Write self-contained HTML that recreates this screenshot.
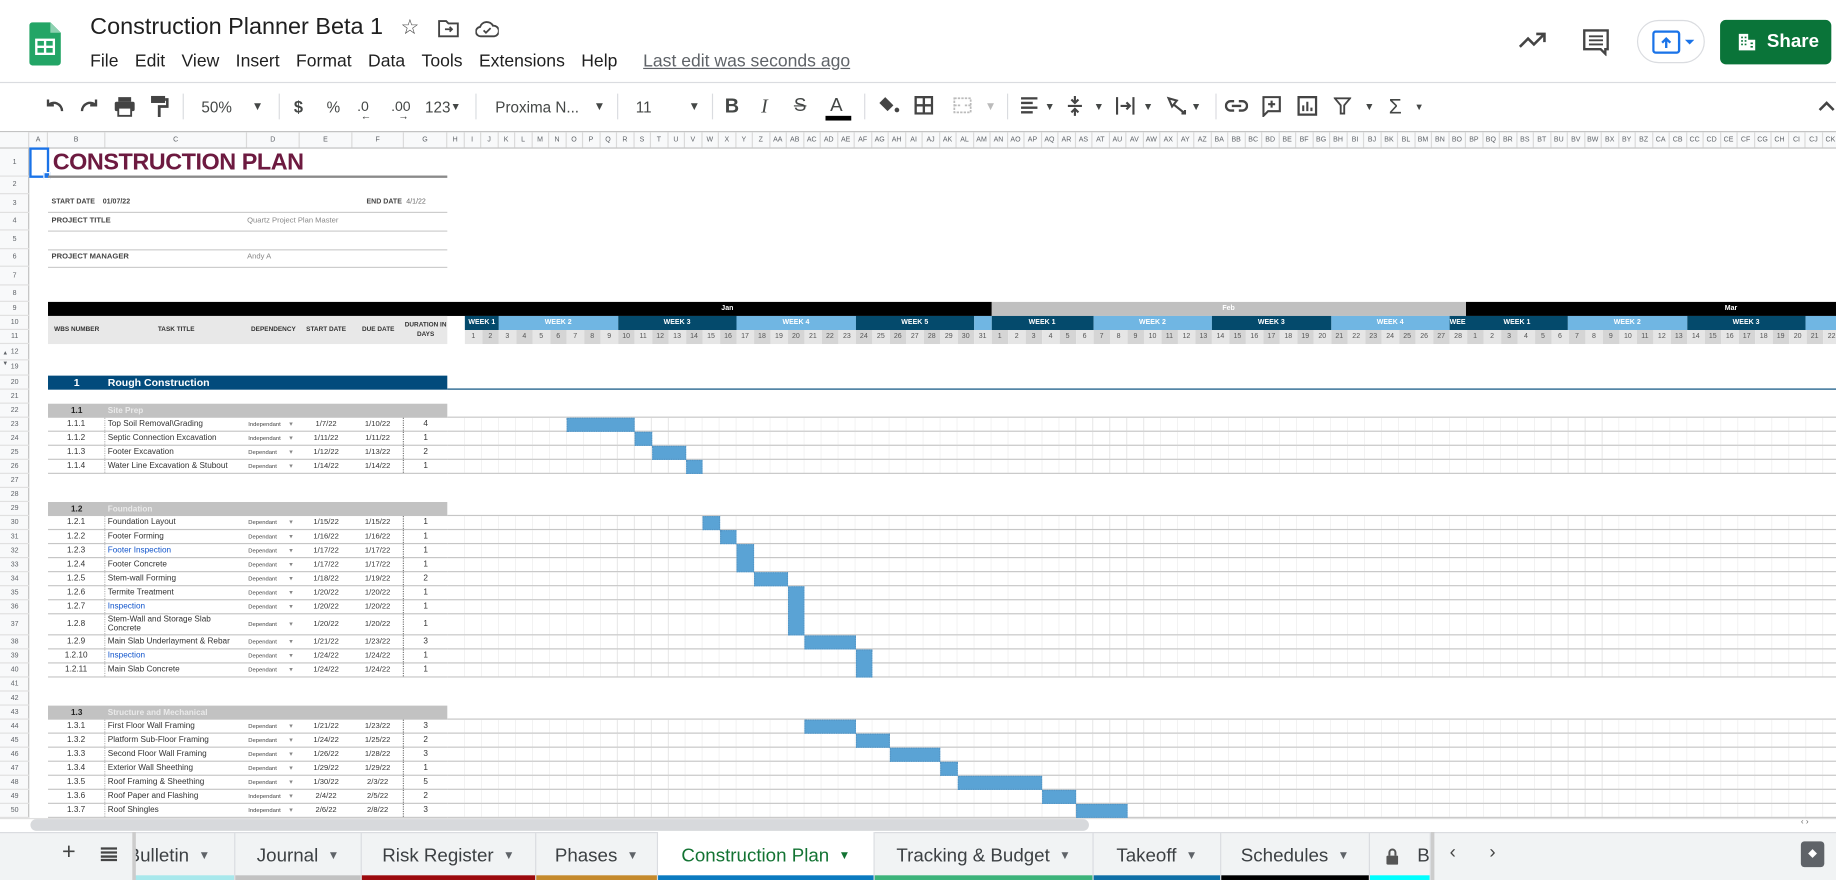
<!DOCTYPE html>
<html><head><meta charset="utf-8">
<style>
*{box-sizing:border-box;margin:0;padding:0}
html,body{width:1836px;height:880px;overflow:hidden;background:#fff}
#w{position:absolute;left:0;top:0;width:1568px;height:752px;transform:scale(1.17092,1.1702);transform-origin:0 0;font-family:"Liberation Sans",Arial,sans-serif;color:#202124;overflow:hidden}
.a{position:absolute}
.menu span{margin-right:14px}
.tb{position:absolute;top:81px;height:20px;display:flex;align-items:center;justify-content:center;color:#444746;font-size:14px}
.sep{position:absolute;top:80px;width:1px;height:22px;background:#dadce0}
#colh{position:absolute;top:112px;left:0;height:15px;display:flex;background:#f8f9fa;border-top:1px solid #c0c0c0;border-bottom:1px solid #c0c0c0;font-size:6px;color:#5f6368}
#colh span{border-right:1px solid #dadada;display:flex;align-items:center;justify-content:center;flex:none;width:14.5px;height:13px;overflow:hidden}
#rowh{position:absolute;left:0;top:127px;width:25px;height:572px;background:#f8f9fa;border-right:1px solid #c0c0c0}
.rn{position:absolute;left:0;width:25px;font-size:6px;color:#5f6368;text-align:center;border-bottom:1px solid #e0e0e0;display:flex;align-items:center;justify-content:center}
.r{position:absolute;left:41px;width:341px;display:flex;border-bottom:1px solid #c6c6c6;font-size:7px;color:#333;align-items:center}
.r>div{height:100%;display:flex;align-items:center;flex:none}
.c1{width:49px;justify-content:center;border-right:1px dotted #bbb}
.c2{width:121px;padding-left:2px;line-height:8px}
.c3{width:45px;font-size:5px;padding-left:1px;color:#444;position:relative}
.c3:after{content:"▾";position:absolute;right:6px;font-size:6px;color:#888}
.c4{width:45px;justify-content:center;font-size:6.5px}
.c5{width:44px;justify-content:center;font-size:6.5px;border-right:1px dotted #777}
.c6{width:37px;justify-content:center}
.g{position:absolute;left:382px;width:1186px;border-bottom:1px solid #c6c6c6;background-image:repeating-linear-gradient(to right,transparent 0,transparent 14px,#e6e6e6 14px,#e6e6e6 14.5px);background-position:0.5px 0}
.bar{position:absolute;background:#5aa3d5;border:1px dotted #5595c4}
.grp{position:absolute;left:41px;width:341px;height:12px;background:#c2c2c2;display:flex;align-items:center;font-size:7px;font-weight:bold}
.grp .n{width:49px;text-align:center;color:#222}
.grp .t{color:#eaeaea;padding-left:2px}
.blue{color:#1155cc}
#days{position:absolute;left:397px;top:282px;height:12px;display:flex;font-size:6px;color:#555}
#days span{width:14.5px;flex:none;text-align:center;line-height:12px}
#days span:nth-child(even){background:#d5d5d5}
#days span:nth-child(odd){background:#e6e6e6}
.wk{position:absolute;top:270px;height:12px;color:#fff;font-size:6px;font-weight:bold;display:flex;align-items:center;justify-content:center;overflow:hidden;white-space:nowrap}
.dk{background:#044a6c}.lt{background:#70b6e3}
.tab{position:absolute;top:711px;height:41px;display:flex;align-items:center;justify-content:center;font-size:16px;color:#3c4043;border-right:1px solid #dadce0}
.tab i{font-style:normal;font-size:10px;margin-left:8px;color:#5f6368}
.tab b{position:absolute;left:0;right:0;bottom:0;height:4px}
</style></head><body><div id="w">

<svg class="a" style="left:25px;top:19px" width="27" height="37" viewBox="0 0 27 37"><path d="M3 0h15l9 9v25a3 3 0 0 1-3 3H3a3 3 0 0 1-3-3V3a3 3 0 0 1 3-3z" fill="#23a566"/><path d="M18 0v9h9z" fill="#8ed1b1"/><rect x="6" y="15" width="15" height="12" fill="none" stroke="#fff" stroke-width="2"/><path d="M6 21h15M13.5 15v12" stroke="#fff" stroke-width="2"/></svg>
<div class="a" style="left:77px;top:12px;font-size:20px;color:#1f1f1f">Construction Planner Beta 1</div>
<div class="a" style="left:342px;top:13px;font-size:18px;color:#444">☆</div>
<svg class="a" style="left:374px;top:16px" width="18" height="16" viewBox="0 0 18 16"><path d="M1 2h6l2 2h8v11H1z" fill="none" stroke="#444" stroke-width="1.6"/><path d="M6 9h6M10 7l2 2-2 2" fill="none" stroke="#444" stroke-width="1.5"/></svg>
<svg class="a" style="left:406px;top:17px" width="20" height="15" viewBox="0 0 20 15"><path d="M5 14a4 4 0 0 1-1-8 6 6 0 0 1 11-1 4.5 4.5 0 0 1 1 9z" fill="none" stroke="#444" stroke-width="1.6"/><path d="M7 9l2 2 4-4" fill="none" stroke="#444" stroke-width="1.5"/></svg>
<div class="a menu" style="left:77px;top:44px;font-size:15px;color:#1f1f1f;white-space:nowrap"><span>File</span><span>Edit</span><span>View</span><span>Insert</span><span>Format</span><span>Data</span><span>Tools</span><span>Extensions</span><span style="margin-right:22px">Help</span><span style="color:#5f6368;text-decoration:underline">Last edit was seconds ago</span></div>
<svg class="a" style="left:1297px;top:26px" width="24" height="16" viewBox="0 0 24 16"><path d="M1 14l7-7 5 5 8-8" fill="none" stroke="#444" stroke-width="2.2"/><path d="M15 3h7v7" fill="none" stroke="#444" stroke-width="2.2"/></svg>
<svg class="a" style="left:1351px;top:24px" width="24" height="24" viewBox="0 0 24 24"><path d="M2 2h20v16h-2v4l-4-4H2z" fill="none" stroke="#444" stroke-width="2"/><path d="M6 7h12M6 10.5h12M6 14h12" stroke="#444" stroke-width="1.6"/></svg>
<div class="a" style="left:1398px;top:17px;width:58px;height:37px;border:1px solid #dadce0;border-radius:19px"></div>
<svg class="a" style="left:1411px;top:26px" width="36" height="20" viewBox="0 0 36 20"><rect x="1" y="1" width="22" height="18" rx="2" fill="none" stroke="#1a73e8" stroke-width="2"/><path d="M12 15V7M8.5 10.5L12 7l3.5 3.5" fill="none" stroke="#1a73e8" stroke-width="2"/><path d="M28 8h8l-4 4z" fill="#1a73e8"/></svg>
<div class="a" style="left:1469px;top:17px;width:95px;height:38px;background:#0a7439;border-radius:5px;color:#fff;font-size:16px;font-weight:bold;display:flex;align-items:center;padding-left:40px">Share</div>
<svg class="a" style="left:1484px;top:28px" width="16" height="16" viewBox="0 0 16 16"><path d="M1 1h8v14H1zM9 6h6v9H9z" fill="#fff"/><path d="M3 4h1.5M6 4h1.5M3 7h1.5M6 7h1.5M3 10h1.5M6 10h1.5M11 9h2M11 12h2" stroke="#0a7439" stroke-width="1.4"/></svg>
<div class="a" style="left:0;top:70px;width:1568px;height:1px;background:#dadce0"></div>

<svg class="a" style="left:37px;top:83px" width="18" height="14" viewBox="0 0 18 14"><path d="M16 12a7 7 0 0 0-12-5M4 2v5h5" fill="none" stroke="#444" stroke-width="2"/></svg>
<svg class="a" style="left:68px;top:83px" width="18" height="14" viewBox="0 0 18 14"><path d="M2 12a7 7 0 0 1 12-5M14 2v5H9" fill="none" stroke="#444" stroke-width="2"/></svg>
<svg class="a" style="left:97px;top:82px" width="19" height="18" viewBox="0 0 19 18"><rect x="4" y="1" width="11" height="4" fill="#444"/><rect x="1" y="5" width="17" height="8" rx="1.5" fill="#444"/><rect x="4" y="10" width="11" height="7" fill="#fff" stroke="#444" stroke-width="1.6"/></svg>
<svg class="a" style="left:128px;top:81px" width="16" height="20" viewBox="0 0 16 20"><rect x="1" y="1" width="12" height="6" fill="#444"/><path d="M13 4h2v6H8v9" fill="none" stroke="#444" stroke-width="2.4"/></svg>
<div class="sep" style="left:156px"></div>
<div class="tb" style="left:172px;font-size:13px">50%</div>
<div class="tb" style="left:215px;font-size:10px">▼</div>
<div class="sep" style="left:238px"></div>
<div class="tb" style="left:251px;font-size:14px;font-weight:bold">$</div>
<div class="tb" style="left:279px;font-size:13px">%</div>
<div class="tb" style="left:305px;font-size:12px">.0<span style="font-size:9px;position:absolute;left:3px;top:13px">←</span></div>
<div class="tb" style="left:334px;font-size:12px">.00<span style="font-size:9px;position:absolute;left:6px;top:13px">→</span></div>
<div class="tb" style="left:363px;font-size:13px">123<span style="font-size:9px">▼</span></div>
<div class="sep" style="left:406px"></div>
<div class="tb" style="left:423px;font-size:13px">Proxima N...</div>
<div class="tb" style="left:507px;font-size:10px">▼</div>
<div class="sep" style="left:527px"></div>
<div class="tb" style="left:543px;font-size:13px">11</div>
<div class="tb" style="left:588px;font-size:10px">▼</div>
<div class="sep" style="left:608px"></div>
<div class="tb" style="left:619px;font-size:17px;font-weight:bold">B</div>
<div class="tb" style="left:650px;font-size:17px;font-style:italic;font-family:'Liberation Serif',serif">I</div>
<div class="tb" style="left:678px;font-size:16px;text-decoration:line-through">S</div>
<div class="tb" style="left:709px;font-size:16px">A</div>
<div class="a" style="left:705px;top:99px;width:22px;height:4px;background:#000"></div>
<div class="sep" style="left:738px"></div>
<svg class="a" style="left:749px;top:82px" width="20" height="16" viewBox="0 0 20 16"><path d="M7 1l7 7-5 5-7-7z" fill="#444"/><circle cx="17" cy="12" r="2" fill="#444"/></svg>
<svg class="a" style="left:781px;top:82px" width="16" height="16" viewBox="0 0 16 16"><rect x="1" y="1" width="14" height="14" fill="none" stroke="#444" stroke-width="2"/><path d="M8 1v14M1 8h14" stroke="#444" stroke-width="2"/></svg>
<svg class="a" style="left:814px;top:83px" width="16" height="14" viewBox="0 0 16 14"><path d="M1 1h14v12H1zM1 7h5M10 7h5" fill="none" stroke="#bbb" stroke-width="1.5" stroke-dasharray="2 1"/></svg>
<div class="tb" style="left:841px;font-size:10px;color:#bbb">▼</div>
<div class="sep" style="left:860px"></div>
<svg class="a" style="left:871px;top:83px" width="16" height="14" viewBox="0 0 16 14"><path d="M1 1h14M1 5h10M1 9h14M1 13h10" stroke="#444" stroke-width="2"/></svg>
<div class="tb" style="left:892px;font-size:9px">▼</div>
<svg class="a" style="left:911px;top:81px" width="14" height="19" viewBox="0 0 14 19"><path d="M1 9.5h12M7 1v6M4 4l3 3 3-3M7 18v-6M4 15l3-3 3 3" fill="none" stroke="#444" stroke-width="1.8"/></svg>
<div class="tb" style="left:934px;font-size:9px">▼</div>
<svg class="a" style="left:952px;top:82px" width="18" height="17" viewBox="0 0 18 17"><path d="M2 1v15M16 1v15M5 8.5h8M10 5.5l3 3-3 3" fill="none" stroke="#444" stroke-width="1.8"/></svg>
<div class="tb" style="left:976px;font-size:9px">▼</div>
<svg class="a" style="left:996px;top:82px" width="18" height="16" viewBox="0 0 18 16"><path d="M2 2l7 2 -4 5zM6 7l10 8M13 15h3v-3" fill="none" stroke="#444" stroke-width="1.8"/></svg>
<div class="tb" style="left:1017px;font-size:9px">▼</div>
<div class="sep" style="left:1038px"></div>
<svg class="a" style="left:1046px;top:85px" width="20" height="11" viewBox="0 0 20 11"><path d="M8 1.5H5a4 4 0 0 0 0 8h3M12 1.5h3a4 4 0 0 1 0 8h-3M6 5.5h8" fill="none" stroke="#444" stroke-width="2"/></svg>
<svg class="a" style="left:1078px;top:82px" width="16" height="18" viewBox="0 0 16 18"><path d="M1 1h14v12H5l-4 4z" fill="none" stroke="#444" stroke-width="1.8"/><path d="M8 4v6M5 7h6" stroke="#444" stroke-width="1.8"/></svg>
<svg class="a" style="left:1108px;top:82px" width="17" height="17" viewBox="0 0 17 17"><rect x="1" y="1" width="15" height="15" fill="none" stroke="#444" stroke-width="2"/><path d="M5 13V8M8.5 13V5M12 13v-3" stroke="#444" stroke-width="1.8"/></svg>
<svg class="a" style="left:1139px;top:83px" width="15" height="15" viewBox="0 0 15 15"><path d="M1 1h13L9 7v7H6V7z" fill="none" stroke="#444" stroke-width="1.6"/></svg>
<div class="tb" style="left:1165px;font-size:9px">▼</div>
<div class="tb" style="left:1186px;font-size:18px">Σ</div>
<div class="tb" style="left:1208px;font-size:8px">▼</div>
<svg class="a" style="left:1553px;top:86px" width="14" height="9" viewBox="0 0 14 9"><path d="M1 8l6-6 6 6" fill="none" stroke="#444" stroke-width="2.2"/></svg>

<div id="colh"><span style="width:25px;background:#f8f9fa"></span><span style="width:16px">A</span><span style="width:49px">B</span><span style="width:121px">C</span><span style="width:45px">D</span><span style="width:45px">E</span><span style="width:44px">F</span><span style="width:37px">G</span><span>H</span><span>I</span><span>J</span><span>K</span><span>L</span><span>M</span><span>N</span><span>O</span><span>P</span><span>Q</span><span>R</span><span>S</span><span>T</span><span>U</span><span>V</span><span>W</span><span>X</span><span>Y</span><span>Z</span><span>AA</span><span>AB</span><span>AC</span><span>AD</span><span>AE</span><span>AF</span><span>AG</span><span>AH</span><span>AI</span><span>AJ</span><span>AK</span><span>AL</span><span>AM</span><span>AN</span><span>AO</span><span>AP</span><span>AQ</span><span>AR</span><span>AS</span><span>AT</span><span>AU</span><span>AV</span><span>AW</span><span>AX</span><span>AY</span><span>AZ</span><span>BA</span><span>BB</span><span>BC</span><span>BD</span><span>BE</span><span>BF</span><span>BG</span><span>BH</span><span>BI</span><span>BJ</span><span>BK</span><span>BL</span><span>BM</span><span>BN</span><span>BO</span><span>BP</span><span>BQ</span><span>BR</span><span>BS</span><span>BT</span><span>BU</span><span>BV</span><span>BW</span><span>BX</span><span>BY</span><span>BZ</span><span>CA</span><span>CB</span><span>CC</span><span>CD</span><span>CE</span><span>CF</span><span>CG</span><span>CH</span><span>CI</span><span>CJ</span><span>CK</span></div>

<div id="rowh">
<div class="rn" style="top:0;height:24px">1</div><div class="rn" style="top:24px;height:15px">2</div><div class="rn" style="top:39px;height:16px">3</div><div class="rn" style="top:55px;height:15px">4</div><div class="rn" style="top:70px;height:16px">5</div><div class="rn" style="top:86px;height:15px">6</div><div class="rn" style="top:101px;height:16px">7</div><div class="rn" style="top:117px;height:14px">8</div><div class="rn" style="top:131px;height:12px">9</div><div class="rn" style="top:143px;height:12px">10</div><div class="rn" style="top:155px;height:12px">11</div><div class="rn" style="top:167px;height:14px">12<span class="a" style="left:2px;top:5px;font-size:5px">▲</span></div><div class="rn" style="top:181px;height:13px">19<span class="a" style="left:2px;top:0;font-size:5px">▼</span></div>
<div class="rn" style="top:194px;height:12px">20</div><div class="rn" style="top:206px;height:12px">21</div><div class="rn" style="top:218px;height:12px">22</div><div class="rn" style="top:230px;height:12px">23</div><div class="rn" style="top:242px;height:12px">24</div><div class="rn" style="top:254px;height:12px">25</div><div class="rn" style="top:266px;height:12px">26</div><div class="rn" style="top:278px;height:12px">27</div><div class="rn" style="top:290px;height:12px">28</div><div class="rn" style="top:302px;height:12px">29</div><div class="rn" style="top:314px;height:12px">30</div><div class="rn" style="top:326px;height:12px">31</div><div class="rn" style="top:338px;height:12px">32</div><div class="rn" style="top:350px;height:12px">33</div><div class="rn" style="top:362px;height:12px">34</div><div class="rn" style="top:374px;height:12px">35</div><div class="rn" style="top:386px;height:12px">36</div><div class="rn" style="top:398px;height:18px">37</div><div class="rn" style="top:416px;height:12px">38</div><div class="rn" style="top:428px;height:12px">39</div><div class="rn" style="top:440px;height:12px">40</div><div class="rn" style="top:452px;height:12px">41</div><div class="rn" style="top:464px;height:12px">42</div><div class="rn" style="top:476px;height:12px">43</div><div class="rn" style="top:488px;height:12px">44</div><div class="rn" style="top:500px;height:12px">45</div><div class="rn" style="top:512px;height:12px">46</div><div class="rn" style="top:524px;height:12px">47</div><div class="rn" style="top:536px;height:12px">48</div><div class="rn" style="top:548px;height:12px">49</div><div class="rn" style="top:560px;height:12px">50</div>
</div>

<div class="a" style="left:25px;top:126px;width:17px;height:26px;border:2px solid #1a73e8"></div>
<div class="a" style="left:37px;top:147px;width:6px;height:6px;background:#1a73e8;border:1px solid #fff"></div>
<div class="a" style="left:45px;top:127px;font-size:20px;font-weight:bold;color:#6d1a40;line-height:24px;letter-spacing:-0.4px">CONSTRUCTION PLAN</div>
<div class="a" style="left:41px;top:150px;width:341px;height:2px;background:#8a8a8a"></div>
<div class="a" style="left:44px;top:170px;font-size:6px;font-weight:bold;color:#444">START DATE &nbsp;&nbsp; 01/07/22</div>
<div class="a" style="left:313px;top:170px;font-size:6px;font-weight:bold;color:#444">END DATE</div>
<div class="a" style="left:347px;top:170px;font-size:6px;color:#666">4/1/22</div>
<div class="a" style="left:41px;top:181px;width:341px;height:1px;background:#ccc"></div>
<div class="a" style="left:44px;top:185px;font-size:6.5px;font-weight:bold;color:#444">PROJECT TITLE</div>
<div class="a" style="left:211px;top:185px;font-size:6.5px;color:#888">Quartz Project Plan Master</div>
<div class="a" style="left:41px;top:197px;width:341px;height:1px;background:#ccc"></div>
<div class="a" style="left:41px;top:213px;width:341px;height:1px;background:#ccc"></div>
<div class="a" style="left:44px;top:216px;font-size:6.5px;font-weight:bold;color:#444">PROJECT MANAGER</div>
<div class="a" style="left:211px;top:216px;font-size:6.5px;color:#888">Andy A</div>
<div class="a" style="left:41px;top:228px;width:341px;height:1px;background:#ccc"></div>

<div class="a" style="left:41px;top:258px;width:806px;height:12px;background:#000"></div>
<div class="a" style="left:616px;top:258px;font-size:6px;color:#fff;font-weight:bold;line-height:12px">Jan</div>
<div class="a" style="left:846.5px;top:258px;width:405.5px;height:12px;background:#c0c0c0;color:#fff;font-size:6px;font-weight:bold;text-align:center;line-height:12px">Feb</div>
<div class="a" style="left:1252px;top:258px;width:316px;height:12px;background:#000;color:#fff;font-size:6px;font-weight:bold;line-height:12px;padding-left:221px">Mar</div>

<div class="a" style="left:41px;top:270px;width:341px;height:24px;background:#e8e8e8;display:flex;align-items:center;font-size:5.5px;font-weight:bold;color:#333">
<div style="width:49px;text-align:center">WBS NUMBER</div><div style="width:121px;text-align:center">TASK TITLE</div><div style="width:45px;text-align:center">DEPENDENCY</div><div style="width:45px;text-align:center">START DATE</div><div style="width:44px;text-align:center">DUE DATE</div><div style="width:37px;text-align:center;line-height:8px">DURATION IN DAYS</div></div>

<div class="wk dk" style="left:397px;width:29px">WEEK 1</div>
<div class="wk lt" style="left:426px;width:101.5px">WEEK 2</div>
<div class="wk dk" style="left:527.5px;width:101.5px">WEEK 3</div>
<div class="wk lt" style="left:629px;width:101.5px">WEEK 4</div>
<div class="wk dk" style="left:730.5px;width:101.5px">WEEK 5</div>
<div class="wk lt" style="left:832px;width:14.5px"></div>
<div class="wk dk" style="left:846.5px;width:87px">WEEK 1</div>
<div class="wk lt" style="left:933.5px;width:101.5px">WEEK 2</div>
<div class="wk dk" style="left:1035px;width:101.5px">WEEK 3</div>
<div class="wk lt" style="left:1136.5px;width:101.5px">WEEK 4</div>
<div class="wk dk" style="left:1238px;width:14.5px;justify-content:flex-start">WEEK</div>
<div class="wk dk" style="left:1252px;width:87px">WEEK 1</div>
<div class="wk lt" style="left:1339px;width:101.5px">WEEK 2</div>
<div class="wk dk" style="left:1440.5px;width:101.5px">WEEK 3</div>
<div class="wk lt" style="left:1542px;width:30px"></div>

<div id="days"><span>1</span><span>2</span><span>3</span><span>4</span><span>5</span><span>6</span><span>7</span><span>8</span><span>9</span><span>10</span><span>11</span><span>12</span><span>13</span><span>14</span><span>15</span><span>16</span><span>17</span><span>18</span><span>19</span><span>20</span><span>21</span><span>22</span><span>23</span><span>24</span><span>25</span><span>26</span><span>27</span><span>28</span><span>29</span><span>30</span><span>31</span><span>1</span><span>2</span><span>3</span><span>4</span><span>5</span><span>6</span><span>7</span><span>8</span><span>9</span><span>10</span><span>11</span><span>12</span><span>13</span><span>14</span><span>15</span><span>16</span><span>17</span><span>18</span><span>19</span><span>20</span><span>21</span><span>22</span><span>23</span><span>24</span><span>25</span><span>26</span><span>27</span><span>28</span><span>1</span><span>2</span><span>3</span><span>4</span><span>5</span><span>6</span><span>7</span><span>8</span><span>9</span><span>10</span><span>11</span><span>12</span><span>13</span><span>14</span><span>15</span><span>16</span><span>17</span><span>18</span><span>19</span><span>20</span><span>21</span><span>22</span></div>

<div class="a" style="left:41px;top:321px;width:341px;height:12px;background:#024b7c;color:#fff;font-size:9px;font-weight:bold;display:flex;align-items:center"><span style="width:49px;text-align:center">1</span><span style="padding-left:2px">Rough Construction</span></div>
<div class="a" style="left:382px;top:332px;width:1186px;height:1px;background:#024b7c"></div>

<div class="grp" style="top:345px"><span class="n">1.1</span><span class="t">Site Prep</span></div>
<div class="a" style="left:382px;top:356px;width:1186px;height:1px;background:#c6c6c6"></div>
<div class="r" style="top:357px;height:12px"><div class="c1">1.1.1</div><div class="c2">Top Soil Removal\Grading</div><div class="c3">Independant</div><div class="c4">1/7/22</div><div class="c5">1/10/22</div><div class="c6">4</div></div>
<div class="r" style="top:369px;height:12px"><div class="c1">1.1.2</div><div class="c2">Septic Connection Excavation</div><div class="c3">Independant</div><div class="c4">1/11/22</div><div class="c5">1/11/22</div><div class="c6">1</div></div>
<div class="r" style="top:381px;height:12px"><div class="c1">1.1.3</div><div class="c2">Footer Excavation</div><div class="c3">Dependant</div><div class="c4">1/12/22</div><div class="c5">1/13/22</div><div class="c6">2</div></div>
<div class="r" style="top:393px;height:12px"><div class="c1">1.1.4</div><div class="c2">Water Line Excavation &amp; Stubout</div><div class="c3">Dependant</div><div class="c4">1/14/22</div><div class="c5">1/14/22</div><div class="c6">1</div></div>
<div class="g" style="top:357px;height:12px"></div><div class="g" style="top:369px;height:12px"></div><div class="g" style="top:381px;height:12px"></div><div class="g" style="top:393px;height:12px"></div>

<div class="grp" style="top:429px"><span class="n">1.2</span><span class="t">Foundation</span></div>
<div class="a" style="left:382px;top:440px;width:1186px;height:1px;background:#c6c6c6"></div>
<div class="r" style="top:441px;height:12px"><div class="c1">1.2.1</div><div class="c2">Foundation Layout</div><div class="c3">Dependant</div><div class="c4">1/15/22</div><div class="c5">1/15/22</div><div class="c6">1</div></div>
<div class="r" style="top:453px;height:12px"><div class="c1">1.2.2</div><div class="c2">Footer Forming</div><div class="c3">Dependant</div><div class="c4">1/16/22</div><div class="c5">1/16/22</div><div class="c6">1</div></div>
<div class="r" style="top:465px;height:12px"><div class="c1">1.2.3</div><div class="c2 blue">Footer Inspection</div><div class="c3">Dependant</div><div class="c4">1/17/22</div><div class="c5">1/17/22</div><div class="c6">1</div></div>
<div class="r" style="top:477px;height:12px"><div class="c1">1.2.4</div><div class="c2">Footer Concrete</div><div class="c3">Dependant</div><div class="c4">1/17/22</div><div class="c5">1/17/22</div><div class="c6">1</div></div>
<div class="r" style="top:489px;height:12px"><div class="c1">1.2.5</div><div class="c2">Stem-wall Forming</div><div class="c3">Dependant</div><div class="c4">1/18/22</div><div class="c5">1/19/22</div><div class="c6">2</div></div>
<div class="r" style="top:501px;height:12px"><div class="c1">1.2.6</div><div class="c2">Termite Treatment</div><div class="c3">Dependant</div><div class="c4">1/20/22</div><div class="c5">1/20/22</div><div class="c6">1</div></div>
<div class="r" style="top:513px;height:12px"><div class="c1">1.2.7</div><div class="c2 blue">Inspection</div><div class="c3">Dependant</div><div class="c4">1/20/22</div><div class="c5">1/20/22</div><div class="c6">1</div></div>
<div class="r" style="top:525px;height:18px"><div class="c1">1.2.8</div><div class="c2">Stem-Wall and Storage Slab<br>Concrete</div><div class="c3">Dependant</div><div class="c4">1/20/22</div><div class="c5">1/20/22</div><div class="c6">1</div></div>
<div class="r" style="top:543px;height:12px"><div class="c1">1.2.9</div><div class="c2">Main Slab Underlayment &amp; Rebar</div><div class="c3">Dependant</div><div class="c4">1/21/22</div><div class="c5">1/23/22</div><div class="c6">3</div></div>
<div class="r" style="top:555px;height:12px"><div class="c1">1.2.10</div><div class="c2 blue">Inspection</div><div class="c3">Dependant</div><div class="c4">1/24/22</div><div class="c5">1/24/22</div><div class="c6">1</div></div>
<div class="r" style="top:567px;height:12px"><div class="c1">1.2.11</div><div class="c2">Main Slab Concrete</div><div class="c3">Dependant</div><div class="c4">1/24/22</div><div class="c5">1/24/22</div><div class="c6">1</div></div>
<div class="g" style="top:441px;height:12px"></div><div class="g" style="top:453px;height:12px"></div><div class="g" style="top:465px;height:12px"></div><div class="g" style="top:477px;height:12px"></div><div class="g" style="top:489px;height:12px"></div><div class="g" style="top:501px;height:12px"></div><div class="g" style="top:513px;height:12px"></div><div class="g" style="top:525px;height:18px"></div><div class="g" style="top:543px;height:12px"></div><div class="g" style="top:555px;height:12px"></div><div class="g" style="top:567px;height:12px"></div>

<div class="grp" style="top:603px"><span class="n">1.3</span><span class="t">Structure and Mechanical</span></div>
<div class="a" style="left:382px;top:614px;width:1186px;height:1px;background:#c6c6c6"></div>
<div class="r" style="top:615px;height:12px"><div class="c1">1.3.1</div><div class="c2">First Floor Wall Framing</div><div class="c3">Dependant</div><div class="c4">1/21/22</div><div class="c5">1/23/22</div><div class="c6">3</div></div>
<div class="r" style="top:627px;height:12px"><div class="c1">1.3.2</div><div class="c2">Platform Sub-Floor Framing</div><div class="c3">Dependant</div><div class="c4">1/24/22</div><div class="c5">1/25/22</div><div class="c6">2</div></div>
<div class="r" style="top:639px;height:12px"><div class="c1">1.3.3</div><div class="c2">Second Floor Wall Framing</div><div class="c3">Dependant</div><div class="c4">1/26/22</div><div class="c5">1/28/22</div><div class="c6">3</div></div>
<div class="r" style="top:651px;height:12px"><div class="c1">1.3.4</div><div class="c2">Exterior Wall Sheething</div><div class="c3">Dependant</div><div class="c4">1/29/22</div><div class="c5">1/29/22</div><div class="c6">1</div></div>
<div class="r" style="top:663px;height:12px"><div class="c1">1.3.5</div><div class="c2">Roof Framing &amp; Sheething</div><div class="c3">Dependant</div><div class="c4">1/30/22</div><div class="c5">2/3/22</div><div class="c6">5</div></div>
<div class="r" style="top:675px;height:12px"><div class="c1">1.3.6</div><div class="c2">Roof Paper and Flashing</div><div class="c3">Independant</div><div class="c4">2/4/22</div><div class="c5">2/5/22</div><div class="c6">2</div></div>
<div class="r" style="top:687px;height:12px"><div class="c1">1.3.7</div><div class="c2">Roof Shingles</div><div class="c3">Independant</div><div class="c4">2/6/22</div><div class="c5">2/8/22</div><div class="c6">3</div></div>
<div class="g" style="top:615px;height:12px"></div><div class="g" style="top:627px;height:12px"></div><div class="g" style="top:639px;height:12px"></div><div class="g" style="top:651px;height:12px"></div><div class="g" style="top:663px;height:12px"></div><div class="g" style="top:675px;height:12px"></div><div class="g" style="top:687px;height:12px"></div>

<div class="bar" style="left:484px;top:357px;width:58px;height:12px"></div>
<div class="bar" style="left:542px;top:369px;width:14.5px;height:12px"></div>
<div class="bar" style="left:556.5px;top:381px;width:29px;height:12px"></div>
<div class="bar" style="left:585.5px;top:393px;width:14.5px;height:12px"></div>
<div class="bar" style="left:600px;top:441px;width:14.5px;height:12px"></div>
<div class="bar" style="left:614.5px;top:453px;width:14.5px;height:12px"></div>
<div class="bar" style="left:629px;top:465px;width:14.5px;height:24px"></div>
<div class="bar" style="left:643.5px;top:489px;width:29px;height:12px"></div>
<div class="bar" style="left:672.5px;top:501px;width:14.5px;height:42px"></div>
<div class="bar" style="left:687px;top:543px;width:43.5px;height:12px"></div>
<div class="bar" style="left:730.5px;top:555px;width:14.5px;height:24px"></div>
<div class="bar" style="left:687px;top:615px;width:43.5px;height:12px"></div>
<div class="bar" style="left:730.5px;top:627px;width:29px;height:12px"></div>
<div class="bar" style="left:759.5px;top:639px;width:43.5px;height:12px"></div>
<div class="bar" style="left:803px;top:651px;width:14.5px;height:12px"></div>
<div class="bar" style="left:817.5px;top:663px;width:72.5px;height:12px"></div>
<div class="bar" style="left:890px;top:675px;width:29px;height:12px"></div>
<div class="bar" style="left:919px;top:687px;width:43.5px;height:12px"></div>

<div class="a" style="left:0;top:699px;width:1568px;height:12px;background:#fff;border-top:1px solid #e0e0e0"></div>
<div class="a" style="left:26px;top:700px;width:904px;height:10px;background:#d7d9dc;border-radius:5px"></div>
<div class="a" style="left:1538px;top:699px;width:30px;height:12px;font-size:7px;color:#666">‹ ›</div>

<div class="a" style="left:0;top:711px;width:1568px;height:41px;background:#f1f3f4;border-top:1px solid #dadce0"></div>
<div class="a" style="left:53px;top:717px;font-size:20px;color:#444">+</div>
<svg class="a" style="left:86px;top:724px" width="14" height="12" viewBox="0 0 14 12"><path d="M0 1h14M0 4.5h14M0 8h14M0 11h14" stroke="#444" stroke-width="2"/></svg>
<div class="tab" style="left:115px;width:86px;justify-content:flex-start;padding-left:0;overflow:hidden"><span style="margin-left:-6px">Bulletin</span><i>▼</i><b style="background:#a8e8ec"></b></div>
<div class="a" style="left:113px;top:711px;width:3px;height:41px;background:#ccc"></div>
<div class="tab" style="left:201px;width:108px">Journal<i>▼</i><b style="background:#c2c2c2"></b></div>
<div class="tab" style="left:309px;width:149px">Risk Register<i>▼</i><b style="background:#9c0a0e"></b></div>
<div class="tab" style="left:458px;width:104px">Phases<i>▼</i><b style="background:#c58a2c"></b></div>
<div class="tab" style="left:562px;width:185px;background:#fff;color:#137333">Construction Plan<i style="color:#137333">▼</i><b style="background:#0b7bc0"></b></div>
<div class="tab" style="left:747px;width:187px">Tracking &amp; Budget<i>▼</i><b style="background:#3cb37a"></b></div>
<div class="tab" style="left:934px;width:109px">Takeoff<i>▼</i><b style="background:#0e6fa6"></b></div>
<div class="tab" style="left:1043px;width:127px">Schedules<i>▼</i><b style="background:#000"></b></div>
<div class="tab" style="left:1170px;width:52px;justify-content:flex-start;padding-left:14px;overflow:hidden"><svg width="12" height="16" viewBox="0 0 12 16"><path d="M3 7V4a3 3 0 0 1 6 0v3" fill="none" stroke="#555" stroke-width="2"/><rect x="0" y="7" width="12" height="9" rx="1.5" fill="#555"/></svg><span style="margin-left:16px">B</span><b style="background:#00ffff"></b></div>
<div class="a" style="left:1222px;top:711px;width:3px;height:41px;background:#ccc"></div>
<div class="a" style="left:1238px;top:720px;font-size:16px;color:#444">‹</div>
<div class="a" style="left:1272px;top:720px;font-size:16px;color:#444">›</div>
<div class="a" style="left:1538px;top:719px;width:20px;height:22px;background:#5f6368;border-radius:3px;color:#fff;font-size:10px;text-align:center;line-height:22px">◆</div>

</div></body></html>
